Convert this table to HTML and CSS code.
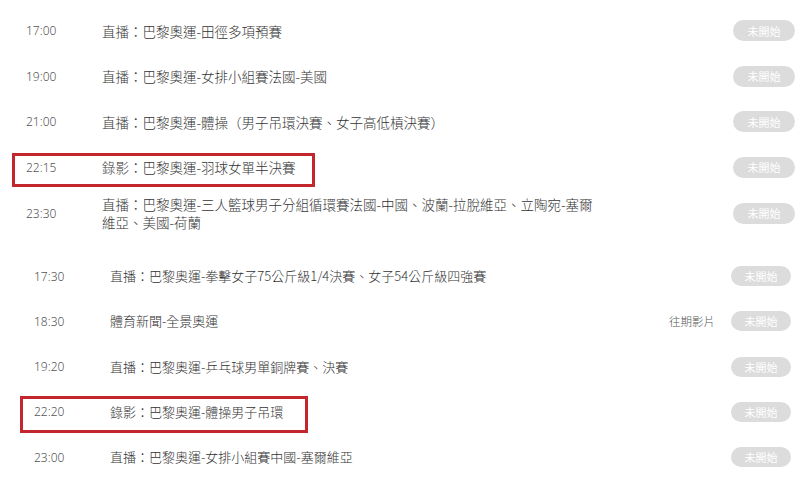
FILE: index.html
```html
<!DOCTYPE html>
<html lang="zh-Hant">
<head>
<meta charset="utf-8">
<title>節目表</title>
<link rel="stylesheet" href="styles.css">
</head>
<body>
<div class="page">
  <ul class="schedule schedule-a">
    <li class="row"><span class="time">17:00</span><span class="title">直播：巴黎奧運-田徑多項預賽</span><span class="side"><span class="badge">未開始</span></span></li>
    <li class="row"><span class="time">19:00</span><span class="title">直播：巴黎奧運-女排小組賽法國-美國</span><span class="side"><span class="badge">未開始</span></span></li>
    <li class="row"><span class="time">21:00</span><span class="title">直播：巴黎奧運-體操（男子吊環決賽、女子高低槓決賽）</span><span class="side"><span class="badge">未開始</span></span></li>
    <li class="row"><span class="mark mark-a"></span><span class="time">22:15</span><span class="title">錄影：巴黎奧運-羽球女單半決賽</span><span class="side"><span class="badge">未開始</span></span></li>
    <li class="row row-tall"><span class="time">23:30</span><span class="title">直播：巴黎奧運-三人籃球男子分組循環賽法國-中國、波蘭-拉脫維亞、立陶宛-塞爾維亞、美國-荷蘭</span><span class="side"><span class="badge">未開始</span></span></li>
  </ul>
  <ul class="schedule schedule-b">
    <li class="row"><span class="time">17:30</span><span class="title">直播：巴黎奧運-拳擊女子75公斤級1/4決賽、女子54公斤級四強賽</span><span class="side"><span class="badge">未開始</span></span></li>
    <li class="row"><span class="time">18:30</span><span class="title">體育新聞-全景奧運</span><span class="side"><span class="replay">往期影片</span><span class="badge">未開始</span></span></li>
    <li class="row"><span class="time">19:20</span><span class="title">直播：巴黎奧運-乒乓球男單銅牌賽、決賽</span><span class="side"><span class="badge">未開始</span></span></li>
    <li class="row"><span class="mark mark-b"></span><span class="time">22:20</span><span class="title">錄影：巴黎奧運-體操男子吊環</span><span class="side"><span class="badge">未開始</span></span></li>
    <li class="row"><span class="time">23:00</span><span class="title">直播：巴黎奧運-女排小組賽中國-塞爾維亞</span><span class="side"><span class="badge">未開始</span></span></li>
  </ul>
</div>
</body>
</html>
```
FILE: styles.css
```css
html, body {
  margin: 0;
  padding: 0;
  background: #fff;
}
body {
  font-family: "Noto Sans CJK SC", "Noto Sans CJK TC", sans-serif;
  color: #333;
}
.page {
  padding-top: 8px;
}
.schedule {
  list-style: none;
  margin: 0;
  padding: 0;
}
.row {
  position: relative;
  display: flex;
  align-items: center;
}
.schedule-a .row {
  height: 45.5px;
  padding: 0 5px 0 26px;
}
.schedule-a .row-tall {
  height: 46px;
}
.schedule-b {
  margin-top: 17.4px;
}
.schedule-b .row {
  height: 45.25px;
  padding: 0 9px 0 34px;
}
.time {
  flex: 0 0 76px;
  font-family: "Noto Sans", "Liberation Sans", sans-serif;
  font-size: 12px;
  font-weight: 300;
  color: #555;
}
.title {
  max-width: 500px;
  font-size: 13.5px;
  font-weight: 300;
  line-height: 18px;
  color: #333;
}
.schedule-b .title {
  font-size: 13px;
}
.side {
  margin-left: auto;
  display: flex;
  align-items: center;
  gap: 16px;
}
.replay {
  font-size: 11.5px;
  font-weight: 300;
  color: #555;
}
.badge {
  display: flex;
  align-items: center;
  justify-content: center;
  width: 62px;
  height: 21px;
  border-radius: 11px;
  background: #dcdcdc;
  color: #fff;
  font-size: 11px;
}
.schedule-b .badge {
  width: 60px;
  height: 20px;
  border-radius: 10px;
}
.mark {
  position: absolute;
  box-sizing: border-box;
  border: 3px solid #c3262d;
}
.mark-a {
  left: 12px;
  top: 8.5px;
  width: 303px;
  height: 34px;
}
.mark-b {
  left: 20px;
  top: 6.5px;
  width: 288px;
  height: 37px;
}
```
